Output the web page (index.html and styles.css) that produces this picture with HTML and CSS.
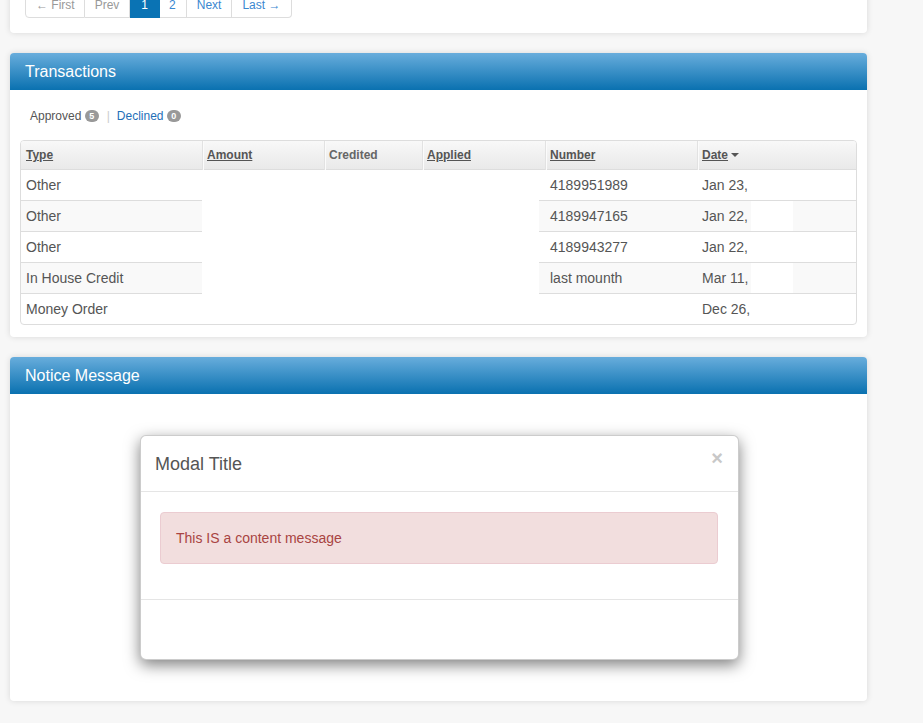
FILE: index.html
```html
<!DOCTYPE html>
<html>
<head>
<meta charset="utf-8">
<link rel="stylesheet" href="styles.css">
</head>
<body>
<div class="page">
  <div class="panel panel-top">
    <ul class="pagination">
      <li class="disabled first-page">&larr; First</li>
      <li class="disabled">Prev</li>
      <li class="active">1</li>
      <li class="narrow">2</li>
      <li>Next</li>
      <li>Last &rarr;</li>
    </ul>
  </div>

  <div class="panel">
    <div class="panel-heading">Transactions</div>
    <div class="panel-body">
      <div class="tabs">
        <span class="tab tab-current">Approved <span class="badge">5</span></span>
        <span class="sep">|</span>
        <span class="tab tab-link">Declined <span class="badge">0</span></span>
      </div>
      <div class="table">
        <div class="thead">
          <div class="th"><span class="sort">Type</span></div>
          <div class="th"><span class="sort">Amount</span></div>
          <div class="th">Credited</div>
          <div class="th"><span class="sort">Applied</span></div>
          <div class="th"><span class="sort">Number</span></div>
          <div class="th"><span class="sort">Date</span> <span class="caret"></span></div>
        </div>
        <div class="tr first">
          <div class="td c-type">Other</div><div class="td c-empty"></div><div class="td c-num">4189951989</div><div class="td c-date">Jan 23,</div><div class="td c-gap"></div><div class="td c-tail"></div>
        </div>
        <div class="tr striped">
          <div class="td c-type">Other</div><div class="td c-empty"></div><div class="td c-num">4189947165</div><div class="td c-date">Jan 22,</div><div class="td c-gap"></div><div class="td c-tail"></div>
        </div>
        <div class="tr">
          <div class="td c-type">Other</div><div class="td c-empty"></div><div class="td c-num">4189943277</div><div class="td c-date">Jan 22,</div><div class="td c-gap"></div><div class="td c-tail"></div>
        </div>
        <div class="tr striped">
          <div class="td c-type">In House Credit</div><div class="td c-empty"></div><div class="td c-num">last mounth</div><div class="td c-date">Mar 11,</div><div class="td c-gap"></div><div class="td c-tail"></div>
        </div>
        <div class="tr">
          <div class="td c-type">Money Order</div><div class="td c-empty"></div><div class="td c-num"></div><div class="td c-date">Dec 26,</div><div class="td c-gap"></div><div class="td c-tail"></div>
        </div>
      </div>
    </div>
  </div>

  <div class="panel">
    <div class="panel-heading">Notice Message</div>
    <div class="panel-body notice-body">
      <div class="modal">
        <div class="modal-header">
          <span class="modal-title">Modal Title</span>
          <span class="close">&times;</span>
        </div>
        <div class="modal-body">
          <div class="alert">This IS a content message</div>
        </div>
        <div class="modal-footer"></div>
      </div>
    </div>
  </div>
</div>
</body>
</html>
```

FILE: styles.css
```css
html, body {
  margin: 0;
  padding: 0;
  background: #f7f7f7;
  font-family: "Liberation Sans", Arial, sans-serif;
  color: #555;
  overflow: hidden;
}

.page {
  width: 857px;
  margin-left: 10px;
}

.panel {
  background: #fff;
  border-radius: 4px;
  box-shadow: 0 0 6px rgba(0, 0, 0, 0.13);
  margin-bottom: 20px;
}

.panel-top {
  margin-top: -29px;
  padding: 21px 15px 15px;
}

.pagination {
  display: flex;
  list-style: none;
  margin: 0;
  padding: 0;
}

.pagination li {
  height: 24px;
  line-height: 24px;
  padding: 0 10px;
  font-size: 12px;
  color: #3a87d0;
  border: 1px solid #ddd;
  border-left: none;
  background: #fff;
}

.pagination li.first-page {
  border-left: 1px solid #ddd;
  border-bottom-left-radius: 4px;
  padding: 0 9px 0 10px;
}

.pagination li.narrow {
  padding: 0 10px 0 9px;
}

.pagination li:last-child {
  border-bottom-right-radius: 4px;
  padding: 0 11px 0 10px;
}

.pagination li.disabled {
  color: #999;
}

.pagination li.active {
  background: #0a73b4;
  border-color: #0a73b4;
  color: #fff;
  padding: 0 11px;
}

.panel-heading {
  height: 37px;
  line-height: 38px;
  padding-left: 15px;
  color: #fff;
  font-size: 16px;
  border-radius: 4px 4px 0 0;
  background: linear-gradient(to bottom, #68addc 0%, #0a71b0 100%);
}

.panel-body {
  padding: 10px 10px 12px;
}

.tabs {
  display: flex;
  align-items: center;
  height: 16px;
  padding: 8px 10px 0;
  margin-bottom: 16px;
  font-size: 12px;
}

.tab-current {
  color: #555;
}

.tab-link {
  color: #1f6fb8;
}

.sep {
  color: #ccc;
  margin: 0 7px 0 8px;
}

.badge {
  display: inline-block;
  min-width: 6px;
  height: 12px;
  line-height: 12px;
  padding: 0 4px;
  border-radius: 6px;
  background: #999;
  color: #fff;
  font-size: 9px;
  font-weight: bold;
  text-align: center;
  vertical-align: 1px;
}

.table {
  border: 1px solid #ddd;
  border-radius: 4px;
  overflow: hidden;
}

.thead {
  display: grid;
  grid-template-columns: 181px 122px 98px 123px 152px 159px;
  height: 28px;
  background: linear-gradient(to bottom, #f8f8f8 0%, #e9e9e9 100%);
  border-bottom: 1px solid #ddd;
}

.th {
  font-size: 12px;
  font-weight: bold;
  color: #666;
  line-height: 29px;
  padding-left: 4px;
  border-left: 1px solid #e2e2e2;
  box-shadow: inset 1px 0 0 #fbfbfb;
}

.th:first-child {
  border-left: none;
  box-shadow: none;
  padding-left: 5px;
}

.th .sort {
  color: #555;
  text-decoration: underline;
}

.caret {
  display: inline-block;
  width: 0;
  height: 0;
  border-left: 4px solid transparent;
  border-right: 4px solid transparent;
  border-top: 4px solid #555;
  vertical-align: 2px;
}

.tr {
  display: grid;
  grid-template-columns: 181px 337px 158px 54px 42px 63px;
  height: 31px;
}

.tr.first {
  height: 30px;
}

.td {
  font-size: 14px;
  line-height: 30px;
  color: #555;
  border-top: 1px solid #ddd;
  white-space: nowrap;
}

.tr.first .td {
  border-top: none;
}

.td.c-empty {
  border-top: 1px solid transparent;
}

.c-type {
  padding-left: 5px;
}

.c-num {
  padding-left: 11px;
}

.c-date {
  padding-left: 5px;
}

.striped .c-type,
.striped .c-num,
.striped .c-date,
.striped .c-tail {
  background: #f9f9f9;
}

.notice-body {
  padding: 41px 0;
}

.modal {
  width: 597px;
  margin-left: 130px;
  background: #fff;
  border: 1px solid rgba(0, 0, 0, 0.2);
  border-radius: 6px;
  box-shadow: 0 5px 15px rgba(0, 0, 0, 0.5);
}

.modal-header {
  display: flex;
  justify-content: space-between;
  align-items: flex-start;
  height: 55px;
  padding: 0 15px 0 14px;
  border-bottom: 1px solid #e5e5e5;
}

.modal-title {
  font-size: 18px;
  line-height: 56px;
  color: #555;
}

.close {
  font-size: 20px;
  font-weight: bold;
  color: #c8c8c8;
  line-height: 44px;
}

.modal-body {
  padding: 20px 20px 20px 19px;
}

.alert {
  height: 50px;
  line-height: 50px;
  padding-left: 15px;
  background: #f2dede;
  border: 1px solid #ebccd1;
  border-radius: 4px;
  color: #a94442;
  font-size: 14px;
  margin-bottom: 15px;
}

.modal-footer {
  height: 59px;
  border-top: 1px solid #e5e5e5;
}
```
